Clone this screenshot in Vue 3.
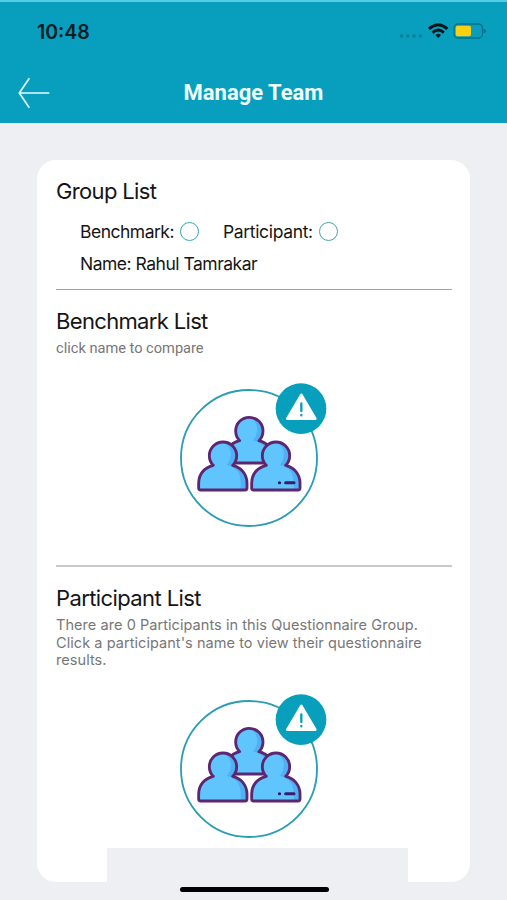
<script setup>
import { h } from 'vue'

const personPath =
  'M-72 97 V82 C-72 55 -54 35 -28 29 A41 41 0 1 1 30 29 C55 35 73 55 73 82 V97 Q73 103 67 103 H-66 Q-72 103 -72 97 Z'
const shadePath =
  'M4 -38 C30 -26 30 8 12 28 C26 32 38 37 46 48 C54 60 55 80 54 100 H70 V82 C70 55 52 36 27 30 C48 10 45 -34 4 -38 Z'

const person = (x, y) =>
  h('g', { transform: `translate(${x} ${y})` }, [
    h('path', { d: personPath, fill: '#60c5fd' }),
    h('path', { d: shadePath, fill: '#4fb0f4' }),
    h('path', { d: personPath, fill: 'none', stroke: '#5c2670', 'stroke-width': 8.5, 'stroke-linejoin': 'round' }),
  ])

const TeamArt = () =>
  h('svg', { viewBox: '0 0 510 480', width: 170, height: 160, 'aria-hidden': 'true' }, [
    h('circle', { cx: 237, cy: 249, r: 204, fill: '#fff', stroke: '#2b9db2', 'stroke-width': 5.5 }),
    person(237, 168),
    h('path', { d: 'M187 267 H287 V290 H187 Z', fill: '#fff' }),
    h('path', { d: 'M188 264 H286', stroke: '#5c2670', 'stroke-width': 8.5 }),
    person(158, 242),
    person(317, 242),
    h('path', { d: 'M328 323 h1 M347 323 h25', stroke: '#3b1b6b', 'stroke-width': 9, 'stroke-linecap': 'round' }),
    h('circle', { cx: 393, cy: 101, r: 76, fill: '#079fbb' }),
    h('path', { d: 'M394 60 L436 131 H352 Z', fill: '#fff', stroke: '#fff', 'stroke-width': 8, 'stroke-linejoin': 'round' }),
    h('path', { d: 'M394 85 V108 M394 120 v1', stroke: '#079fbb', 'stroke-width': 7, 'stroke-linecap': 'round' }),
  ])
</script>

<template>
  <div class="screen">
    <header class="header">
      <div class="status">
        <span class="time">10:48</span>
        <svg class="indicators" viewBox="0 0 90 20" width="90" height="20" aria-hidden="true">
          <g fill="#087e98">
            <circle cx="4.5" cy="14" r="1.8" /><circle cx="10.8" cy="14" r="1.8" />
            <circle cx="17" cy="14" r="1.8" /><circle cx="23.3" cy="14" r="1.8" />
          </g>
          <g fill="none" stroke="#05161b" stroke-width="2.9">
            <path d="M32 6.9 Q41.2 -1.3 50.4 6.9" />
            <path d="M35.5 10.6 Q41.2 5.6 46.9 10.6" />
          </g>
          <path d="M38.4 13 Q41.2 10.6 44 13 L41.2 15.9 Z" fill="#05161b" />
          <rect x="57" y="2" width="28.5" height="14" rx="4" fill="none" stroke="#087187" stroke-width="1.3" />
          <rect x="58.7" y="3.7" width="15.3" height="10.6" rx="2" fill="#fbd012" />
          <path d="M86.5 6.5 Q89 7.1 89 9 Q89 10.9 86.5 11.5 Z" fill="#087187" />
        </svg>
      </div>
      <div class="bar">
        <svg class="back" viewBox="0 0 34 34" width="34" height="34" role="img" aria-label="Back">
          <path d="M12.3 2.2 L2.3 17 L12.3 31.8 M2.3 17 H32.3" fill="none" stroke="#e2fbff" stroke-width="1.7" />
        </svg>
        <h1 class="title">Manage Team</h1>
      </div>
    </header>

    <main class="card">
      <section class="group">
        <h2 class="heading">Group List</h2>
        <div class="options">
          <span>Benchmark:</span><i class="radio"></i>
          <span class="second">Participant:</span><i class="radio"></i>
        </div>
        <p class="name">Name: Rahul Tamrakar</p>
      </section>
      <section class="bench">
        <h2 class="heading">Benchmark List</h2>
        <p class="hint">click name to compare</p>
        <div class="art"><TeamArt /></div>
      </section>
      <section class="people">
        <h2 class="heading">Participant List</h2>
        <p class="note">There are 0 Participants in this Questionnaire Group.<br />Click a participant's name to view their questionnaire<br />results.</p>
        <div class="art"><TeamArt /></div>
      </section>
    </main>

    <div class="dock"><div class="home"></div></div>
  </div>
</template>

<style>
body {
  margin: 0;
  overflow: hidden;
}
</style>

<style scoped>
.screen {
  position: relative;
  box-sizing: border-box;
  width: 507px;
  height: 900px;
  overflow: hidden;
  background: #edeff3;
  color: #151515;
  font-family: Inter, "Liberation Sans", sans-serif;
}
h1, h2, p { margin: 0; font-weight: 400; }
.header {
  box-sizing: border-box;
  height: 123px;
  border-top: 2px solid #55cce3;
  background: #089fbe;
}
.status {
  display: flex;
  justify-content: space-between;
  padding: 20px 20px 0 37px;
  height: 20px;
}
.time {
  color: #071c23;
  font-size: 19.5px;
  font-weight: 600;
  line-height: 20px;
}
.bar {
  display: grid;
  grid-template-columns: 83px 1fr 83px;
  align-items: center;
  height: 34px;
  margin-top: 33.5px;
  padding: 0 17px;
}
.title {
  text-align: center;
  color: #effdff;
  font-family: Roboto, sans-serif;
  font-size: 22px;
  font-weight: 700;
  line-height: 33px;
  padding-bottom: 1px;
  white-space: nowrap;
}
.card {
  box-sizing: border-box;
  width: 433px;
  height: 722px;
  margin: 37px 0 0 37px;
  padding: 0 18px 0 19px;
  border-radius: 19px;
  background: #fff;
}
section { box-sizing: border-box; white-space: nowrap; }
.group { height: 130px; padding-top: 17px; border-bottom: 1px solid #a2a2a2; }
.bench { height: 277px; padding-top: 17px; border-bottom: 2px solid #c9c9c9; }
.people { padding-top: 17px; }
.heading { font-size: 22px; line-height: 28px; letter-spacing: -0.66px; }
.people .heading { letter-spacing: -0.6px; }
.options {
  display: flex;
  align-items: center;
  height: 20px;
  margin-top: 16px;
  padding-left: 24px;
  font-size: 17.5px;
  line-height: 20px;
  letter-spacing: -0.5px;
}
.options span { padding-top: 1px; }
.radio {
  box-sizing: border-box;
  width: 19px;
  height: 19px;
  margin-left: 6px;
  border: 1.5px solid #3da7b5;
  border-radius: 50%;
}
.options .second { margin-left: 24px; letter-spacing: -0.35px; }
.name { padding-left: 24px; margin-top: 13px; font-size: 17.5px; line-height: 20px; letter-spacing: -0.49px; }
.hint { margin-top: 4px; color: #777; font-family: Roboto, sans-serif; font-size: 14.6px; line-height: 18px; }
.note { margin-top: 4px; color: #777; font-size: 14.5px; line-height: 17.5px; letter-spacing: 0.06px; }
.art { height: 160px; margin-top: 18px; padding-left: 114px; }
.people .art { margin-top: 17px; }
.art svg { display: block; }
.dock {
  position: absolute;
  left: 107px;
  top: 848px;
  box-sizing: border-box;
  width: 301px;
  height: 52px;
  padding: 39px 0 0 72.5px;
  background: #edeff3;
}
.home { width: 149px; height: 5px; border-radius: 3px; background: #000; }
</style>
